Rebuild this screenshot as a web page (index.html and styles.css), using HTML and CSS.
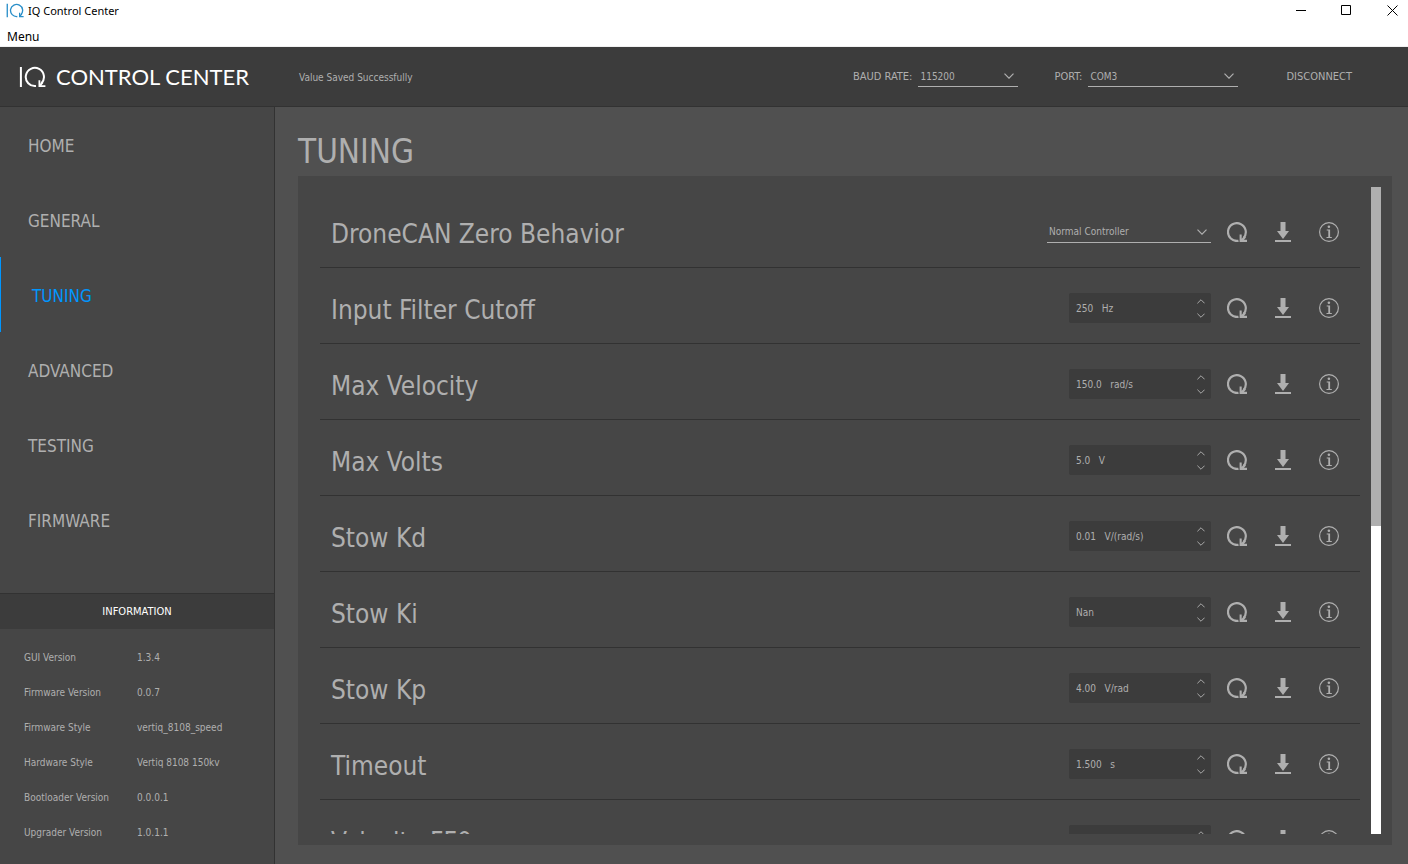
FILE: index.html
```html
<!DOCTYPE html>
<html lang="en">
<head>
<meta charset="utf-8">
<title>IQ Control Center</title>
<link rel="stylesheet" href="styles.css">
</head>
<body>
<svg class="sprite" aria-hidden="true">
  <symbol id="logo" viewBox="0 0 27 22"><path d="M1.900 1v20M17 20A9.100 9.100 0 1 1 22.300 17.400" fill="none" stroke="currentColor" stroke-width="2"/><path d="M20.400 14.200v6h6M20.800 19.800l3-3.600" fill="none" stroke="currentColor" stroke-width="1.800"/></symbol>
  <symbol id="reload" viewBox="0 0 20 20"><path d="M11.500 18.800A8.900 8.900 0 1 1 16.600 15.900" fill="none" stroke="currentColor" stroke-width="2.200"/><path d="M12.600 12.500v7.500H20v-2.200h-3l2-2.400-1.800-1.400-2.500 2.800v-4.300z" fill="currentColor"/></symbol>
  <symbol id="save" viewBox="0 0 20 20"><path d="M7.500 0h5v9H16l-6 8-6-8h3.500zM2 18h16v2H2z" fill="currentColor"/></symbol>
  <symbol id="info" viewBox="0 0 20 20"><circle cx="10" cy="10" r="9.400" fill="none" stroke="currentColor" stroke-width="1.200"/><circle cx="9.900" cy="4.700" r="1.300" fill="currentColor"/><path d="M7.700 7.600h3.400v7.300h1.700v1H7.500v-1h1.800V8.500H7.700z" fill="currentColor"/></symbol>
  <symbol id="down" viewBox="0 0 10 6"><path d="M.5.7 5 5.200 9.500.7" fill="none" stroke="currentColor" stroke-width="1.200"/></symbol>
  <symbol id="up" viewBox="0 0 10 6"><path d="M.5 5.300 5 .8 9.500 5.300" fill="none" stroke="currentColor" stroke-width="1.200"/></symbol>
</svg>
<div class="app">
  <div class="titlebar">
    <svg class="app-icon"><use href="#logo"/></svg>
    <span class="app-name">IQ Control Center</span>
    <div class="window-controls">
      <button type="button" aria-label="Minimize"><svg viewBox="0 0 11 11"><path d="M1 5.500h10" stroke="#000"/></svg></button>
      <button type="button" aria-label="Maximize"><svg viewBox="0 0 11 11"><path d="M.5.5h9v9h-9z" fill="none" stroke="#000"/></svg></button>
      <button type="button" aria-label="Close"><svg viewBox="0 0 11 11"><path d="M.5.5l10 10M10.500.5l-10 10" stroke="#000"/></svg></button>
    </div>
  </div>
  <div class="menubar"><button type="button">Menu</button></div>

  <header class="header">
    <div class="brand"><svg class="brand-mark"><use href="#logo"/></svg><span>CONTROL CENTER</span></div>
    <p class="status">Value Saved Successfully</p>
    <div class="connection">
      <div class="field">
        <label for="baud">BAUD RATE:</label>
        <div class="select baud"><select id="baud"><option>115200</option></select><svg><use href="#down"/></svg></div>
      </div>
      <div class="field">
        <label for="port">PORT:</label>
        <div class="select port"><select id="port"><option>COM3</option></select><svg><use href="#down"/></svg></div>
      </div>
      <button class="disconnect" type="button">DISCONNECT</button>
    </div>
  </header>

  <div class="body">
    <aside class="sidebar">
      <nav class="nav">
        <a href="#home">HOME</a>
        <a href="#general">GENERAL</a>
        <a href="#tuning" class="active" aria-current="page">TUNING</a>
        <a href="#advanced">ADVANCED</a>
        <a href="#testing">TESTING</a>
        <a href="#firmware">FIRMWARE</a>
      </nav>
      <section class="information">
        <h2>INFORMATION</h2>
        <dl>
          <dt>GUI Version</dt><dd>1.3.4</dd>
          <dt>Firmware Version</dt><dd>0.0.7</dd>
          <dt>Firmware Style</dt><dd>vertiq_8108_speed</dd>
          <dt>Hardware Style</dt><dd>Vertiq 8108 150kv</dd>
          <dt>Bootloader Version</dt><dd>0.0.0.1</dd>
          <dt>Upgrader Version</dt><dd>1.0.1.1</dd>
        </dl>
      </section>
    </aside>

    <main class="main">
      <h1>TUNING</h1>
      <div class="panel">
        <div class="rows">
          <div class="row">
            <label for="zero">DroneCAN Zero Behavior</label>
            <div class="select mode"><select id="zero"><option>Normal Controller</option></select><svg><use href="#down"/></svg></div>
            <div class="actions"><button type="button" aria-label="Reload"><svg><use href="#reload"/></svg></button><button type="button" aria-label="Save"><svg><use href="#save"/></svg></button><button type="button" aria-label="Info"><svg><use href="#info"/></svg></button></div>
          </div>
          <div class="row">
            <label for="cutoff">Input Filter Cutoff</label>
            <div class="spin"><input id="cutoff" type="text" value="250   Hz"><div class="steps"><button type="button" aria-label="Increase"><svg><use href="#up"/></svg></button><button type="button" aria-label="Decrease"><svg><use href="#down"/></svg></button></div></div>
            <div class="actions"><button type="button" aria-label="Reload"><svg><use href="#reload"/></svg></button><button type="button" aria-label="Save"><svg><use href="#save"/></svg></button><button type="button" aria-label="Info"><svg><use href="#info"/></svg></button></div>
          </div>
          <div class="row">
            <label for="velocity">Max Velocity</label>
            <div class="spin"><input id="velocity" type="text" value="150.0   rad/s"><div class="steps"><button type="button" aria-label="Increase"><svg><use href="#up"/></svg></button><button type="button" aria-label="Decrease"><svg><use href="#down"/></svg></button></div></div>
            <div class="actions"><button type="button" aria-label="Reload"><svg><use href="#reload"/></svg></button><button type="button" aria-label="Save"><svg><use href="#save"/></svg></button><button type="button" aria-label="Info"><svg><use href="#info"/></svg></button></div>
          </div>
          <div class="row">
            <label for="volts">Max Volts</label>
            <div class="spin"><input id="volts" type="text" value="5.0   V"><div class="steps"><button type="button" aria-label="Increase"><svg><use href="#up"/></svg></button><button type="button" aria-label="Decrease"><svg><use href="#down"/></svg></button></div></div>
            <div class="actions"><button type="button" aria-label="Reload"><svg><use href="#reload"/></svg></button><button type="button" aria-label="Save"><svg><use href="#save"/></svg></button><button type="button" aria-label="Info"><svg><use href="#info"/></svg></button></div>
          </div>
          <div class="row">
            <label for="kd">Stow Kd</label>
            <div class="spin"><input id="kd" type="text" value="0.01   V/(rad/s)"><div class="steps"><button type="button" aria-label="Increase"><svg><use href="#up"/></svg></button><button type="button" aria-label="Decrease"><svg><use href="#down"/></svg></button></div></div>
            <div class="actions"><button type="button" aria-label="Reload"><svg><use href="#reload"/></svg></button><button type="button" aria-label="Save"><svg><use href="#save"/></svg></button><button type="button" aria-label="Info"><svg><use href="#info"/></svg></button></div>
          </div>
          <div class="row">
            <label for="ki">Stow Ki</label>
            <div class="spin"><input id="ki" type="text" value="Nan"><div class="steps"><button type="button" aria-label="Increase"><svg><use href="#up"/></svg></button><button type="button" aria-label="Decrease"><svg><use href="#down"/></svg></button></div></div>
            <div class="actions"><button type="button" aria-label="Reload"><svg><use href="#reload"/></svg></button><button type="button" aria-label="Save"><svg><use href="#save"/></svg></button><button type="button" aria-label="Info"><svg><use href="#info"/></svg></button></div>
          </div>
          <div class="row">
            <label for="kp">Stow Kp</label>
            <div class="spin"><input id="kp" type="text" value="4.00   V/rad"><div class="steps"><button type="button" aria-label="Increase"><svg><use href="#up"/></svg></button><button type="button" aria-label="Decrease"><svg><use href="#down"/></svg></button></div></div>
            <div class="actions"><button type="button" aria-label="Reload"><svg><use href="#reload"/></svg></button><button type="button" aria-label="Save"><svg><use href="#save"/></svg></button><button type="button" aria-label="Info"><svg><use href="#info"/></svg></button></div>
          </div>
          <div class="row">
            <label for="timeout">Timeout</label>
            <div class="spin"><input id="timeout" type="text" value="1.500   s"><div class="steps"><button type="button" aria-label="Increase"><svg><use href="#up"/></svg></button><button type="button" aria-label="Decrease"><svg><use href="#down"/></svg></button></div></div>
            <div class="actions"><button type="button" aria-label="Reload"><svg><use href="#reload"/></svg></button><button type="button" aria-label="Save"><svg><use href="#save"/></svg></button><button type="button" aria-label="Info"><svg><use href="#info"/></svg></button></div>
          </div>
          <div class="row">
            <label for="ff0">Velocity FF0</label>
            <div class="spin"><input id="ff0" type="text" value=""><div class="steps"><button type="button" aria-label="Increase"><svg><use href="#up"/></svg></button><button type="button" aria-label="Decrease"><svg><use href="#down"/></svg></button></div></div>
            <div class="actions"><button type="button" aria-label="Reload"><svg><use href="#reload"/></svg></button><button type="button" aria-label="Save"><svg><use href="#save"/></svg></button><button type="button" aria-label="Info"><svg><use href="#info"/></svg></button></div>
          </div>
        </div>
        <div class="scrollbar"><div class="thumb"></div></div>
      </div>
    </main>
  </div>
</div>
</body>
</html>
```
FILE: styles.css
```css
* { box-sizing: border-box; }

body {
  margin: 0;
  font-family: "DejaVu Sans Condensed", "DejaVu Sans", sans-serif;
  font-size: 10px;
  color: #afafaf;
}

h1, h2, p, dl, dd { margin: 0; font-weight: 400; }

button, input, select {
  margin: 0;
  padding: 0;
  border: 0;
  background: none;
  color: inherit;
  font: inherit;
}

svg { display: block; }
.sprite { position: absolute; width: 0; height: 0; }

.app { display: flex; flex-direction: column; height: 100vh; background: #505050; }

.titlebar, .menubar {
  display: flex;
  align-items: center;
  background: #fff;
  color: #000;
  font-family: "Noto Sans", sans-serif;
  font-size: 12px;
  line-height: 16px;
}
.titlebar { height: 21px; padding-left: 6px; }
.app-icon { width: 18px; height: 15px; color: #2a8fc9; }
.app-name { flex: 1; margin-left: 4px; font-size: 11px; }
.window-controls { display: flex; gap: 35px; padding-right: 10px; }
.window-controls svg { width: 11px; height: 11px; }
.menubar { height: 26px; padding: 6px 7px 0; border-bottom: 1px solid #f0f0f0; }

.header {
  display: flex;
  align-items: center;
  height: 60px;
  padding: 0 56px 0 19px;
  background: #3c3c3c;
  border-bottom: 1px solid #323232;
}
.brand {
  display: flex;
  align-items: center;
  gap: 10px;
  width: 280px;
  color: #fff;
  font: 22px/28px Lato, sans-serif;
}
.brand-mark { width: 27px; height: 22px; }
.status { flex: 1; padding-top: 2px; }
.connection { display: flex; align-items: center; }
.field { display: flex; align-items: center; gap: 6px; margin-right: 36px; }
.field + .field { margin-right: 48px; }
.field label, .disconnect { font-size: 11px; line-height: 20px; }

.select { display: flex; align-items: center; border-bottom: 1px solid #afafaf; height: 20px; padding: 0 4px 0 2px; }
.select select { flex: 1; min-width: 0; height: 100%; appearance: none; }
.select svg { flex: none; width: 10px; height: 6px; }
.baud { width: 100px; }
.port { width: 150px; }
.mode { width: 164px; height: 22px; }

.body { display: flex; flex: 1; min-height: 0; }

.sidebar {
  display: flex;
  flex-direction: column;
  justify-content: space-between;
  width: 275px;
  background: #464646;
  border-right: 1px solid #323232;
}
.nav { display: flex; flex-direction: column; font-size: 17px; }
.nav a {
  display: flex;
  align-items: center;
  height: 75px;
  padding: 2px 0 0 28px;
  color: inherit;
  text-decoration: none;
}
.nav .active { padding-left: 31px; border-left: 1px solid #0096ff; color: #0096ff; }

.information h2 {
  height: 36px;
  background: #3c3c3c;
  border-top: 1px solid #323232;
  color: #fff;
  font-size: 11px;
  line-height: 35px;
  text-align: center;
}
.information dl {
  display: grid;
  grid-template-columns: 113px 1fr;
  padding: 11px 0 14px 24px;
  line-height: 35px;
}

.main { display: flex; flex: 1; flex-direction: column; min-width: 0; padding: 25px 16px 19px 23px; }
.main h1 { font-size: 33px; line-height: 40px; margin-bottom: 4px; }

.panel {
  display: flex;
  flex: 1;
  min-height: 0;
  gap: 11px;
  padding: 11px 11px 11px 22px;
  background: #464646;
}
.rows { flex: 1; overflow: hidden; padding-top: 5px; }
.row {
  display: flex;
  align-items: center;
  height: 76px;
  padding: 5px 21px 0 11px;
  border-bottom: 1px solid #323232;
}
.row > label { flex: 1; padding-top: 4px; font-size: 26px; line-height: 36px; }

.spin {
  display: flex;
  align-items: center;
  width: 142px;
  height: 30px;
  padding: 0 6px 0 7px;
  background: #3c3c3c;
  border-radius: 2px;
}
.spin input { flex: 1; min-width: 0; height: 100%; }
.steps { display: flex; flex-direction: column; gap: 9px; }
.steps svg { width: 8px; height: 5px; }

.actions { display: flex; gap: 26px; margin-left: 16px; }
.actions svg { width: 20px; height: 20px; }

.scrollbar { width: 10px; background: #fff; }
.thumb { height: 52.4%; background: #afafaf; }
```
